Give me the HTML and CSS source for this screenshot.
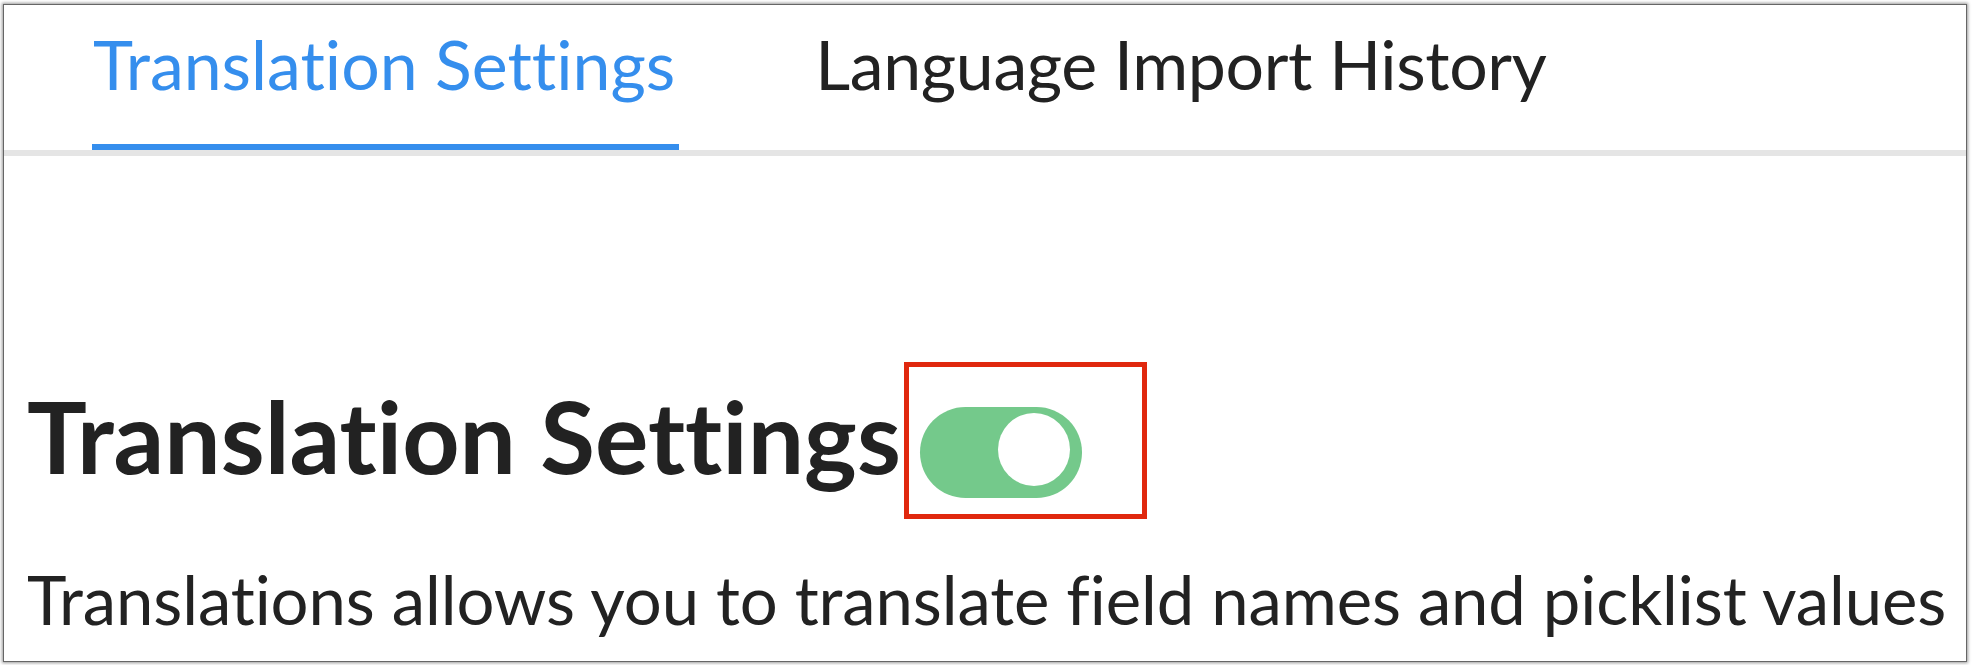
FILE: index.html
```html
<!DOCTYPE html>
<html>
<head>
<meta charset="utf-8">
<link rel="stylesheet" href="styles.css">
</head>
<body>
<div class="frame">
  <nav class="tabs">
    <div class="tab active">Translation Settings</div>
    <div class="tab">Language Import History</div>
  </nav>
  <section class="content">
    <div class="title-row">
      <h1 class="title">Translation Settings</h1>
      <span class="highlight">
        <span class="toggle"><span class="knob"></span></span>
      </span>
    </div>
    <p class="desc">Translations allows you to translate field names and picklist values</p>
  </section>
</div>
</body>
</html>
```
FILE: styles.css
```css
html, body {
  margin: 0;
  padding: 0;
  background: #ffffff;
}
body {
  width: 1972px;
  height: 665px;
  overflow: hidden;
  font-family: Lato, "Liberation Sans", sans-serif;
  color: #222222;
}
.frame {
  box-sizing: border-box;
  margin: 4px 0 0 3px;
  width: 1964px;
  height: 658px;
  border: 1px solid #666666;
  box-shadow: 0 0 3px 1px rgba(0, 0, 0, 0.4);
  background: #ffffff;
  overflow: hidden;
}
.tabs {
  display: flex;
  align-items: flex-end;
  padding-left: 88px;
  border-bottom: 6px solid #e5e5e5;
}
.tab {
  font-size: 68px;
  line-height: 82px;
  padding-top: 18px;
  padding-bottom: 39px;
  border-bottom: 6px solid transparent;
  color: #222222;
  white-space: nowrap;
  font-variant-ligatures: no-common-ligatures;
}
.tab + .tab {
  margin-left: 136px;
  letter-spacing: -0.35px;
}
.tab.active {
  color: #358eed;
  border-bottom-color: #358eed;
  padding-left: 1px;
  padding-right: 4px;
}
.content {
  padding-left: 23px;
  padding-top: 206px;
}
.title-row {
  display: flex;
  align-items: flex-start;
}
.title {
  margin: 13px 0 0 0;
  font-size: 100px;
  line-height: 120px;
  font-weight: 700;
  white-space: nowrap;
  font-variant-ligatures: no-common-ligatures;
}
.highlight {
  display: block;
  margin-left: 3px;
  border: 5px solid #e0280e;
  padding: 40px 60px 16px 11px;
}
.toggle {
  display: flex;
  justify-content: flex-end;
  align-items: flex-start;
  box-sizing: border-box;
  width: 162px;
  height: 91px;
  border-radius: 46px;
  background: #74c98b;
  padding: 6px 12px 0 0;
}
.knob {
  display: block;
  width: 72px;
  height: 73px;
  border-radius: 50%;
  background: #ffffff;
}
.desc {
  margin: 39px 0 0 0;
  font-size: 67px;
  line-height: 82px;
  letter-spacing: -0.1px;
  white-space: nowrap;
}
```
